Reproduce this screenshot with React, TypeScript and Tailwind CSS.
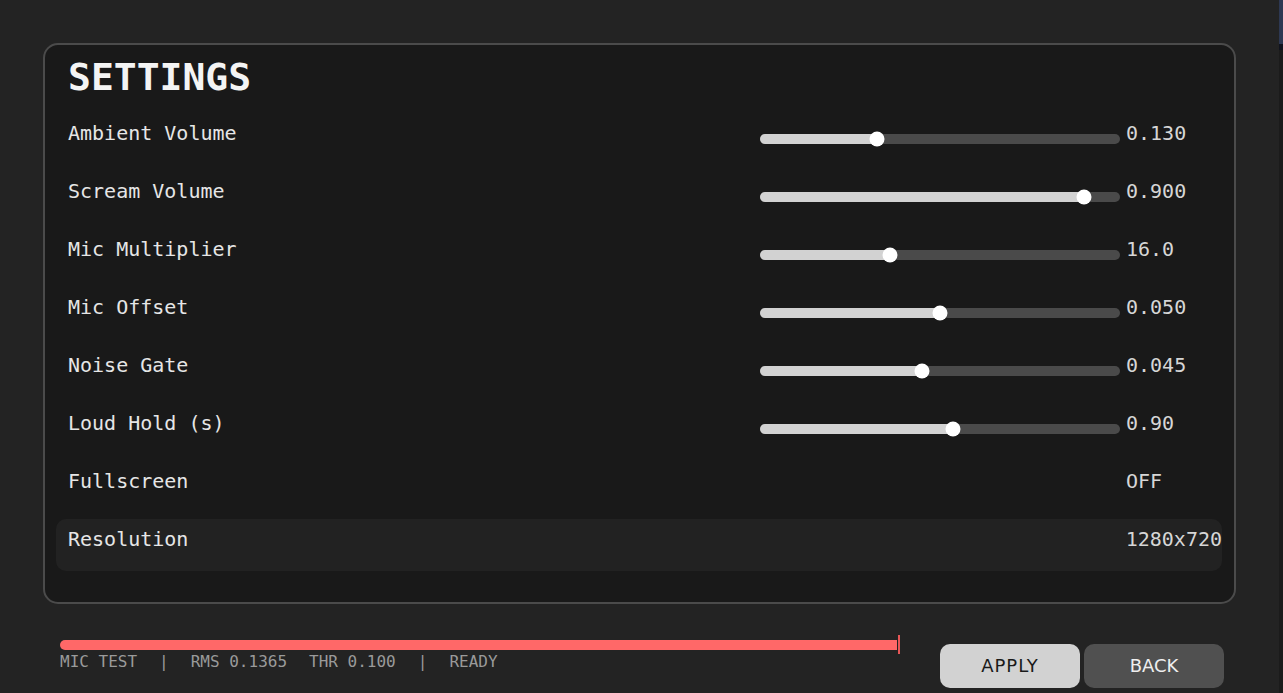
import React from "react";

const rows: { label: string; value: string; frac?: number; highlight?: boolean }[] = [
  { label: "Ambient Volume", value: "0.130", frac: 0.325 },
  { label: "Scream Volume", value: "0.900", frac: 0.9 },
  { label: "Mic Multiplier", value: "16.0", frac: 0.361 },
  { label: "Mic Offset", value: "0.050", frac: 0.5 },
  { label: "Noise Gate", value: "0.045", frac: 0.45 },
  { label: "Loud Hold (s)", value: "0.90", frac: 0.536 },
  { label: "Fullscreen", value: "OFF" },
  { label: "Resolution", value: "1280x720", highlight: true },
];

const mono = { fontFamily: '"DejaVu Sans Mono", "Liberation Mono", monospace' };

function Slider({ frac }: { frac: number }) {
  return (
    <div className="relative h-[10px] w-[360px] rounded-full bg-[#4a4a4a]">
      <div className="h-full rounded-full bg-[#d2d2d2]" style={{ width: `${frac * 100}%` }} />
      <div
        className="absolute top-1/2 h-[15px] w-[15px] -translate-x-1/2 -translate-y-1/2 rounded-full bg-white"
        style={{ left: `${frac * 100}%` }}
      />
    </div>
  );
}

export default function App() {
  return (
    <div className="relative h-[693px] w-[1283px] overflow-hidden bg-[#232323]" style={mono}>
      {/* right edge strip */}
      <div className="absolute right-0 top-0 flex h-full w-[4px] flex-col bg-[#1b1b1b]">
        <div className="h-[44px] bg-[#2d3852]" />
        <div className="h-[6px] bg-[#10131e]" />
      </div>

      <div className="pl-[43px] pt-[43px]">
        <div className="flex h-[561px] w-[1193px] flex-col rounded-[15px] border-2 border-[#4b4b4b] bg-[#191919] px-[11px] pt-[14px]">
          <div className="pl-[12px] text-[38px] font-bold leading-[37px] text-[#f4f4f4]">SETTINGS</div>
          <div className="mt-[17px] flex flex-col gap-[6px]">
            {rows.map((r) => (
              <div
                key={r.label}
                className={`flex h-[52px] w-[1166px] items-start rounded-[10px] pl-[12px] ${
                  r.highlight ? "bg-[#222222]" : ""
                }`}
              >
                <div className="w-[692px] pt-[8px] text-[20px] leading-[24px] text-[#e6e6e6]">{r.label}</div>
                <div className="flex h-[52px] w-[366px] items-center">
                  {r.frac !== undefined && <Slider frac={r.frac} />}
                </div>
                <div className="whitespace-nowrap pt-[8px] text-[20px] leading-[24px] text-[#d6d6d6]">{r.value}</div>
              </div>
            ))}
          </div>
        </div>
      </div>

      <div className="flex pl-[60px] pt-[31px]">
        <div className="flex w-[880px] flex-col">
          <div className="flex h-[19px] items-center">
            <div className="h-[10px] w-[837px] rounded-l-full rounded-r-[5px] bg-[#ff6868]" />
            <div className="ml-[1px] h-[19px] w-[2px] bg-[#e85656]" />
          </div>
          <div className="flex gap-[22px] text-[16px] leading-[16px] text-[#9a9a9a]">
            <span>MIC TEST</span>
            <span>|</span>
            <span>RMS 0.1365</span>
            <span>THR 0.100</span>
            <span>|</span>
            <span>READY</span>
          </div>
        </div>
        <div
          className="mt-[9px] flex gap-[4px]"
          style={{ fontFamily: '"DejaVu Sans", "Liberation Sans", sans-serif' }}
        >
          <div className="flex h-[44px] w-[140px] items-center justify-center rounded-[10px] bg-[#d2d2d2] pb-[1px] text-[18px] tracking-[1px] text-[#1a1a1a]">
            APPLY
          </div>
          <div className="flex h-[44px] w-[140px] items-center justify-center rounded-[10px] bg-[#505050] pb-[1px] text-[18px] text-[#eeeeee]">
            BACK
          </div>
        </div>
      </div>
    </div>
  );
}
